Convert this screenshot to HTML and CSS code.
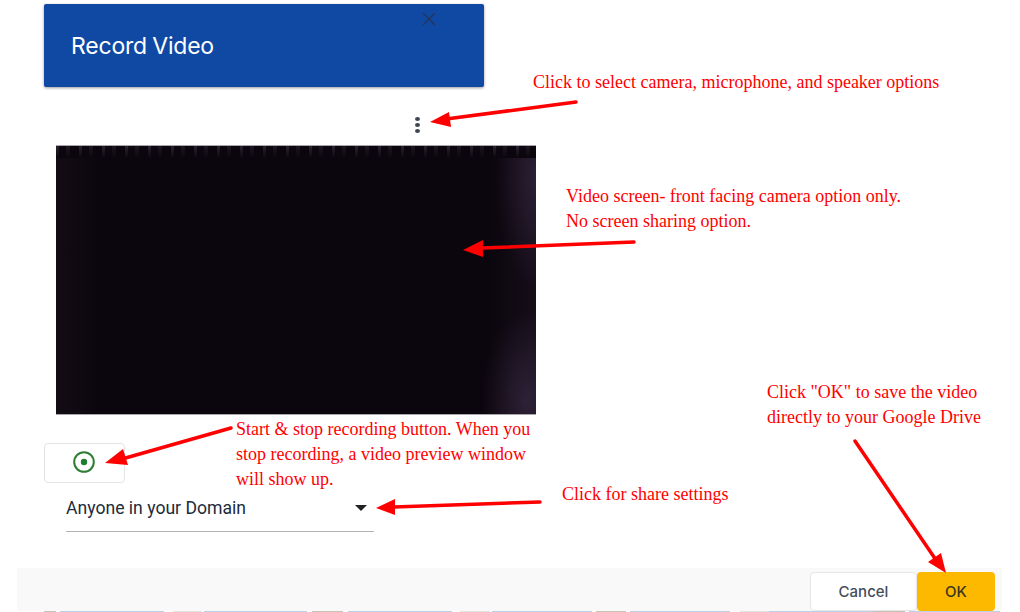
FILE: index.html
```html
<!DOCTYPE html>
<html>

<head>
    <meta charset="utf-8">
    <title>Record Video</title>
    <link rel="stylesheet" href="styles.css">
</head>

<body>
    <div class="page">
        <div class="head">
            <h1>Record Video</h1>
            <svg class="close" width="14" height="14" viewBox="0 0 14 14">
                <path d="M1 1L13 13M13 1L1 13" stroke="#24365f" stroke-width="1.5" fill="none" />
            </svg>
        </div>

        <div class="more"><span></span><span></span><span></span></div>

        <div class="video"></div>

        <div class="record">
            <svg width="22" height="22" viewBox="0 0 22 22">
                <circle cx="11" cy="11" r="9.8" fill="none" stroke="#2e7d32" stroke-width="2" />
                <circle cx="11" cy="11" r="3.2" fill="#1e7e2e" />
            </svg>
        </div>

        <div class="share">
            <span>Anyone in your Domain</span>
            <i class="caret"></i>
        </div>

        <div class="foot">
            <a class="cancel">Cancel</a>
            <a class="ok">OK</a>
        </div>
        <div class="strip"></div>

        <!-- notes drawn over the screenshot -->
        <svg class="arrows" width="1020" height="612" viewBox="0 0 1020 612">
            <g stroke="#f00" stroke-width="3.5" stroke-linecap="round" fill="none">
                <path d="M576 102L446 119" />
                <path d="M634 242L482 248" />
                <path d="M231 428L122 459" />
                <path d="M540 502L394 507" />
                <path d="M855 441L936 560" />
            </g>
            <g fill="#f00">
                <path d="M430 122L449 112L451 127Z" />
                <path d="M463 250L483 240L483 257Z" />
                <path d="M105 463L123 449L128 465Z" />
                <path d="M376 508L395 499L395 515Z" />
                <path d="M946 573L928 562L941 553Z" />
            </g>
        </svg>
        <div class="note n1">Click to select camera, microphone, and speaker options</div>
        <div class="note n2">Video screen- front facing camera option only.<br>No screen sharing option.</div>
        <div class="note n3">Start &amp; stop recording button. When you<br>stop recording, a video preview window<br>will show up.</div>
        <div class="note n4">Click for share settings</div>
        <div class="note n5">Click "OK" to save the video<br>directly to your Google Drive</div>
    </div>
</body>

</html>
```

FILE: styles.css
```css
body {
    margin: 0;
    padding: 0;
    background: #fff;
}

a {
    text-decoration: none;
    cursor: pointer;
}

.page {
    position: relative;
    width: 1020px;
    height: 612px;
    overflow: hidden;
    padding-top: 4px;
    box-sizing: border-box;
    font-family: Roboto, "Liberation Sans", sans-serif;
}

.head {
    position: relative;
    width: 440px;
    height: 83px;
    margin-left: 44px;
    background: #0f49a3;
    border-radius: 2px;
    box-shadow: 0 1px 3px rgba(0, 0, 0, 0.4);
    display: flex;
    align-items: center;
    padding-left: 27px;
    box-sizing: border-box;
}

.head h1 {
    margin: 0;
    font-family: Inter, sans-serif;
    font-size: 23px;
    font-weight: 400;
    color: #fff;
    letter-spacing: -0.2px;
    word-spacing: -1px;
}

.head .close {
    position: absolute;
    left: 378px;
    top: 8px;
}

.more {
    display: flex;
    flex-direction: column;
    gap: 2px;
    width: 5px;
    margin: 30px 0 0 415px;
}

.more span {
    width: 5px;
    height: 4px;
    border-radius: 50%;
    background: #3f4652;
}

.video {
    width: 480px;
    height: 270px;
    margin: 12px 0 0 56px;
    background-color: #0b060d;
    background-image:
        linear-gradient(to bottom, rgba(11, 6, 13, 0), #0b060d),
        repeating-linear-gradient(to right, #2a2432 0 3px, #0d0810 3px 10px, #1e1620 10px 14px, #0b060d 14px 23px),
        radial-gradient(ellipse 40px 110px at 100% 12%, rgba(66, 50, 80, 0.5), rgba(66, 50, 80, 0)),
        radial-gradient(ellipse 45px 90px at 98% 95%, rgba(66, 50, 80, 0.55), rgba(66, 50, 80, 0)),
        linear-gradient(to right, rgba(60, 40, 60, 0.16), rgba(0, 0, 0, 0) 9%, rgba(0, 0, 0, 0) 90%, rgba(62, 45, 75, 0.2));
    background-size: 100% 12px, 100% 12px, 100% 100%, 100% 100%, 100% 100%;
    background-repeat: no-repeat;
    border-top: 1px solid #a8a6ac;
    border-bottom: 1px solid #a8a6ac;
    box-sizing: border-box;
}

.record {
    display: flex;
    align-items: center;
    justify-content: center;
    width: 81px;
    height: 40px;
    margin: 28px 0 0 44px;
    padding: 0 1px 2px 0;
    border: 1px solid #e4e4e4;
    border-radius: 4px;
    box-sizing: border-box;
}

.share {
    display: flex;
    align-items: center;
    justify-content: space-between;
    width: 308px;
    height: 41px;
    margin: 8px 0 0 66px;
    padding: 0 7px 6px 0;
    box-sizing: border-box;
    border-bottom: 1px solid #b5b5b5;
    font-size: 17.6px;
    color: #202b3c;
}

.caret {
    width: 0;
    height: 0;
    border-left: 6px solid transparent;
    border-right: 6px solid transparent;
    border-top: 6px solid #222;
}

.foot {
    display: flex;
    justify-content: flex-end;
    align-items: flex-start;
    width: 985px;
    height: 43px;
    margin: 36px 0 0 17px;
    padding: 4px 7px 0 0;
    box-sizing: border-box;
    background: #f9f9f9;
}

.foot a {
    display: flex;
    align-items: center;
    justify-content: center;
    height: 39px;
    font-size: 15px;
    font-family: Inter, sans-serif;
    font-weight: 500;
    box-sizing: border-box;
    border-radius: 4px;
    padding-bottom: 1px;
}

.cancel {
    width: 107px;
    color: #444c5a;
    background: #fff;
    border: 1px solid #e6e6e6;
}

.ok {
    width: 78px;
    color: #3a3420;
    background: #fcb900;
}

/* sliver of the page below the dialog */
.strip {
    height: 1px;
    background: linear-gradient(to right,
        #fff 44px, #c9c0b6 44px 56px, #fff 56px 60px, #bcd0e8 60px 164px, #fff 164px 173px,
        #e2e2e2 173px 202px, #fff 202px 204px, #bcd0e8 204px 307px, #fff 307px 312px,
        #c9c0b6 312px 343px, #fff 343px 348px, #bcd0e8 348px 452px, #fff 452px 460px,
        #e2e2e2 460px 490px, #fff 490px 492px, #bcd0e8 492px 592px, #fff 592px 596px,
        #c9c0b6 596px 626px, #fff 626px 630px, #bcd0e8 630px 730px, #fff 730px 740px,
        #e2e2e2 740px 769px, #bcd0e8 769px 873px, #c9c0b6 873px 905px, #fff 905px 909px,
        #bcd0e8 909px 1000px, #fff 1000px);
}

.arrows {
    position: absolute;
    left: 0;
    top: 0;
}

.note {
    position: absolute;
    font-family: "Liberation Serif", serif;
    font-size: 18px;
    line-height: 25px;
    color: #f00;
    white-space: nowrap;
}

.n1 {
    left: 533px;
    top: 70px;
}

.n2 {
    left: 566px;
    top: 184px;
}

.n3 {
    left: 236px;
    top: 417px;
}

.n4 {
    left: 562px;
    top: 482px;
}

.n5 {
    left: 767px;
    top: 380px;
}
```
